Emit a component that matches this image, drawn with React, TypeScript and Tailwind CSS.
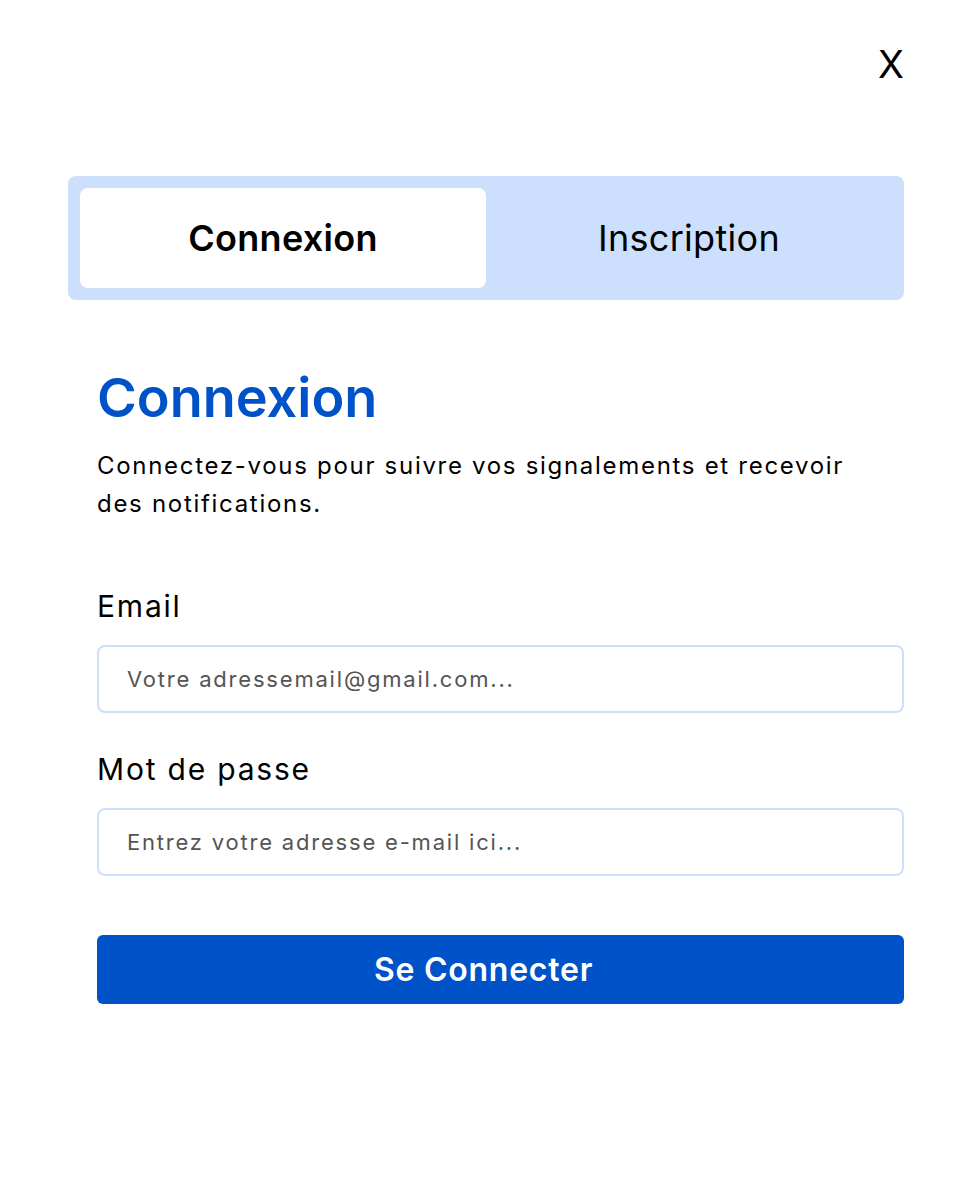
import { useState } from 'react'

const App = () => {
  const [tab, setTab] = useState<'login' | 'signup'>('login')

  return (
    <div className="min-h-screen bg-white text-black font-['Inter',sans-serif]">
      <div className="flex justify-end pr-[64px] pt-[45px]">
        <button className="text-[38px] leading-none font-normal">X</button>
      </div>

      <div className="ml-[68px] mr-[64px] mt-[93px] grid grid-cols-2 rounded-lg bg-[#cce0fd] p-3">
        <button
          onClick={() => setTab('login')}
          className={`h-[100px] rounded-lg text-[36px] tracking-[0.3px] ${tab === 'login' ? 'bg-white font-semibold' : ''}`}
        >
          Connexion
        </button>
        <button
          onClick={() => setTab('signup')}
          className={`h-[100px] rounded-lg text-[36px] tracking-[0.3px] ${tab === 'signup' ? 'bg-white font-semibold' : ''}`}
        >
          Inscription
        </button>
      </div>

      <div className="ml-[97px] mr-[64px] mt-[66px]">
        <h1 className="text-[54px] font-semibold leading-[64px] text-[#0052c8]">Connexion</h1>
        <p className="mt-[17px] max-w-[760px] text-[24px] leading-[38px] tracking-[1.7px]">
          Connectez-vous pour suivre vos signalements et recevoir des notifications.
        </p>

        <div className="mt-[65px] flex flex-col">
          <label className="text-[30px] leading-[36px] tracking-[1.8px]">Email</label>
          <input
            className="mt-[21px] h-[68px] rounded-lg border-2 border-[#cce0fd] px-7 text-[22px] tracking-[1.8px] placeholder:text-[#555] outline-none"
            placeholder="Votre adressemail@gmail.com..."
          />
          <label className="mt-[38px] text-[30px] leading-[36px] tracking-[1.8px]">Mot de passe</label>
          <input
            type="password"
            className="mt-[21px] h-[68px] rounded-lg border-2 border-[#cce0fd] px-7 text-[22px] tracking-[1.8px] placeholder:text-[#555] outline-none"
            placeholder="Entrez votre adresse e-mail ici..."
          />
          <button className="mt-[59px] h-[69px] rounded-md bg-[#0052c8] pr-[34px] text-[32px] font-semibold tracking-[0.75px] text-white">
            Se Connecter
          </button>
        </div>
      </div>
    </div>
  )
}

export default App
